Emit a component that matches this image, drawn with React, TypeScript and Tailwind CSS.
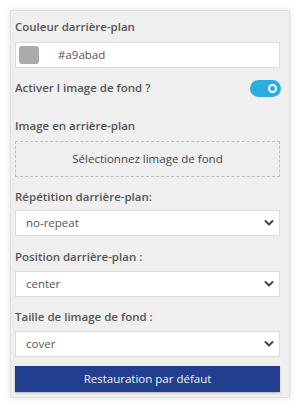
import React from "react";

function Chevron() {
  return (
    <svg width="10" height="8" viewBox="0 0 10 8" className="absolute right-[5px] top-1/2 -translate-y-1/2">
      <polyline points="1.5,2 5,5.5 8.5,2" fill="none" stroke="#444" strokeWidth="2" strokeLinecap="round" strokeLinejoin="round" />
    </svg>
  );
}

function Select({ value, className }: { value: string; className: string }) {
  return (
    <div className={`relative h-[26px] bg-white border border-[#dcdcdc] flex items-center pl-[10px] text-[11.5px] text-[#555] ${className}`}>
      {value}
      <Chevron />
    </div>
  );
}

const label = "h-[18px] leading-[18px] text-[11.5px] font-semibold text-[#555]";

export default function App() {
  return (
    <div className="w-[300px] h-[408px] bg-white pt-[10px] pl-[10px]" style={{ fontFamily: '"Open Sans", sans-serif' }}>
      <div className="w-[280px] h-[388px] bg-[#efefef] border border-[#e0e0e0] shadow-[0_0_6px_rgba(0,0,0,0.12)] pl-[4px] pr-[9px] pt-[7px]">
        <div className={label}>Couleur darrière-plan</div>
        <div className="mt-[6px] h-[26px] bg-white border border-[#dcdcdc] flex items-center pl-[3px]">
          <div className="w-[20px] h-[18px] rounded-[3px] bg-[#a9abad]" />
          <span className="ml-[19px] text-[11.5px] text-[#555]">#a9abad</span>
        </div>
        <div className="mt-[10px] h-[20px] flex items-center justify-between">
          <span className="text-[11.5px] font-semibold text-[#555] leading-[18px]">Activer l image de fond ?</span>
          <div className="w-[31px] h-[17px] rounded-full bg-[#2aaee0] flex items-center justify-end pr-[4px] mr-[-1px]">
            <div className="w-[9px] h-[9px] rounded-full border-2 border-white" />
          </div>
        </div>
        <div className={`mt-[19px] ${label}`}>Image en arrière-plan</div>
        <div className="mt-[6px] h-[36px] border border-dashed border-[#bdbdbd] flex items-center justify-center text-[11.5px] text-[#444]">
          Sélectionnez limage de fond
        </div>
        <div className={`mt-[11px] ${label}`}>Répétition darrière-plan:</div>
        <Select value="no-repeat" className="mt-[4px]" />
        <div className={`mt-[12px] ${label}`}>Position darrière-plan :</div>
        <Select value="center" className="mt-[5px]" />
        <div className={`mt-[11px] ${label}`}>Taille de limage de fond :</div>
        <Select value="cover" className="mt-[5px]" />
        <div className="mt-[9px] h-[26px] bg-[#213f8e] flex items-center justify-center text-[11.5px] text-[#f0f0f0] shadow-[0_1px_2px_rgba(0,0,0,0.25)]">
          Restauration par défaut
        </div>
      </div>
    </div>
  );
}
